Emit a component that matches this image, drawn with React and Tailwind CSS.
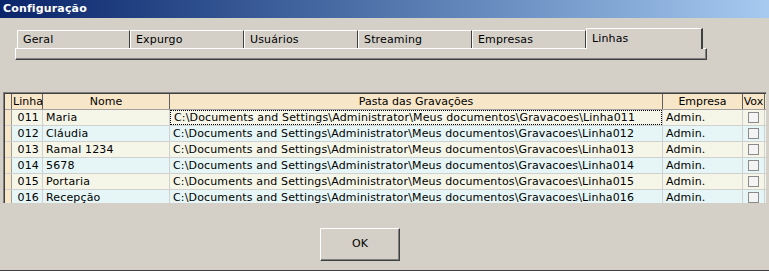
const rows = [
  { linha: '011', nome: 'Maria' },
  { linha: '012', nome: 'Cláudia' },
  { linha: '013', nome: 'Ramal 1234' },
  { linha: '014', nome: '5678' },
  { linha: '015', nome: 'Portaria' },
  { linha: '016', nome: 'Recepção' },
]

const tabs = ['Geral', 'Expurgo', 'Usuários', 'Streaming', 'Empresas']

function Checkbox() {
  return <div className="h-[11px] w-[11px] border border-[#8a8a8a] bg-[#f4f4f4]" />
}

export default function App() {
  return (
    <div
      className="flex h-[271px] w-[769px] flex-col overflow-hidden border-b border-[#404040] bg-[#d4d0c8] text-[11px] tracking-[0.15px] text-black"
      style={{ fontFamily: '"DejaVu Sans", Tahoma, sans-serif' }}
    >
      {/* title bar */}
      <div className="flex h-[18px] items-center bg-gradient-to-r from-[#0a246a] to-[#a6caf0] pl-[3px] text-[11px] font-bold text-white">
        Configuração
      </div>

      {/* tabs */}
      <div className="ml-[15px] mt-[10px] w-[692px]">
        <div className="flex h-[20px] items-end pl-[2px]">
          {tabs.map((tab, i) => (
            <div
              key={tab}
              className={`flex h-[18px] items-center border-t border-r border-l border-t-white border-l-white border-r-[#404040] pl-[5px] pt-[2px] ${
                i === 0 ? 'w-[113px]' : 'w-[114px]'
              }`}
            >
              {tab}
            </div>
          ))}
          <div className="relative z-10 -mb-px flex h-[21px] w-[117px] items-start border-t border-l border-r-2 border-t-white border-l-white border-r-[#404040] bg-[#d4d0c8] pl-[5px] pt-[2px]">
            Linhas
          </div>
        </div>
        <div className="h-[12px] border-t border-l border-r border-b border-t-white border-l-white border-r-[#404040] border-b-[#404040] shadow-[inset_-1px_-1px_0_#808080]" />
      </div>

      {/* grid */}
      <div className="ml-[3px] mt-[32px] h-[111px] w-[763px] overflow-hidden border-l border-t border-[#808080] bg-[#d4d0c8]">
        <div className="h-full border-l border-t border-[#404040]">
          <div className="flex h-[16px] border-b border-[#a0a0a0] bg-[#f8e6c8] tracking-normal">
            <div className="w-[7px] border-r border-[#606060]" />
            <div className="w-[31px] border-r border-[#606060] pl-[1px] leading-[15px]">Linha</div>
            <div className="w-[127px] border-r border-[#606060] text-center leading-[15px]">Nome</div>
            <div className="w-[493px] border-r border-[#606060] text-center leading-[15px]">Pasta das Gravações</div>
            <div className="w-[80px] border-r border-[#606060] text-center leading-[15px]">Empresa</div>
            <div className="w-[22px] border-r border-[#606060] text-center leading-[15px]">Vox</div>
          </div>
          {rows.map((row, i) => (
            <div
              key={row.linha}
              className={`flex h-[16px] border-b border-[#d0d0d0] ${i % 2 === 0 ? 'bg-[#f6f6e8]' : 'bg-[#e6f6f6]'}`}
            >
              <div className="w-[7px] border-r border-[#a0a0a0] bg-[#f8e6c8]" />
              <div className="w-[31px] border-r border-[#d0d0d0] pr-[3px] text-right leading-[16px]">{row.linha}</div>
              <div className="w-[127px] border-r border-[#d0d0d0] pl-[3px] leading-[16px]">{row.nome}</div>
              <div className="w-[493px] border-r border-[#d0d0d0] leading-[16px]">
                <div
                  className={`h-full whitespace-nowrap pl-[3px] ${
                    i === 0 ? 'border border-dotted border-black pl-[2px] leading-[14px]' : ''
                  }`}
                >
                  C:\Documents and Settings\Administrator\Meus documentos\Gravacoes\Linha{row.linha}
                </div>
              </div>
              <div className="w-[80px] border-r border-[#d0d0d0] pl-[3px] leading-[16px]">Admin.</div>
              <div className="flex w-[22px] items-center justify-center border-r border-[#d0d0d0]">
                <Checkbox />
              </div>
            </div>
          ))}
        </div>
      </div>

      {/* button */}
      <div className="ml-[320px] mt-[25px]">
        <button className="h-[33px] w-[80px] border border-t-white border-l-white border-r-[#404040] border-b-[#404040] bg-[#d4d0c8] shadow-[inset_-1px_-1px_0_#808080]">
          OK
        </button>
      </div>
    </div>
  )
}
